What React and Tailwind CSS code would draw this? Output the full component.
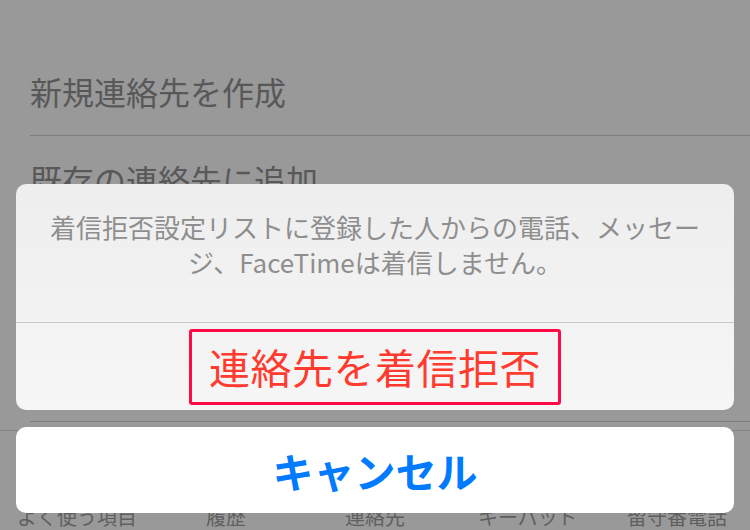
const font = { fontFamily: '"Noto Sans CJK JP", "Noto Sans", sans-serif' };

const tabs = [
  { label: "よく使う項目", w: "w-[115px]", ml: "ml-[17px]" },
  { label: "履歴", w: "w-[38px]", ml: "ml-[74px]" },
  { label: "連絡先", w: "w-[59px]", ml: "ml-[101px]" },
  { label: "キーパッド", w: "w-[94px]", ml: "ml-[74px]" },
  { label: "留守番電話", w: "w-[95px]", ml: "ml-[55px]" },
];

function ActionSheet() {
  return (
    <div className="absolute inset-x-[16px] top-[184px] flex flex-col gap-[17px]">
      <div className="rounded-[10px] overflow-hidden bg-gradient-to-b from-[#eeeeee] to-[#f6f6f6]">
        <div className="h-[138px] px-[24px] pt-[25px] text-center text-[26px] leading-[35px] text-[#8e8e8e]">
          着信拒否設定リストに登録した人からの電話、メッセージ、FaceTimeは着信しません。
        </div>
        <div className="h-px bg-[#c8c8c8]" />
        <div className="h-[87px] flex items-center justify-center">
          <div className="relative px-[20px] h-[76px] flex items-center">
            <span className="text-[41px] leading-none text-[#ff3b30] tracking-[0.5px]">連絡先を着信拒否</span>
            <div className="absolute inset-0 border-[3px] border-[#ff0a45] rounded-[3px]" />
          </div>
        </div>
      </div>
      <button className="h-[86px] rounded-[10px] bg-white flex items-center justify-center">
        <span className="text-[41px] font-bold leading-none text-[#007aff]">キャンセル</span>
      </button>
    </div>
  );
}

export default function App() {
  return (
    <div className="relative w-[750px] h-[530px] overflow-hidden bg-[#999999]" style={font}>
      <div className="pt-[72px]">
        <div className="ml-[30px] border-b border-[#7c7c7c] h-[64px]">
          <span className="text-[32px] leading-[38px] text-[#585858]">新規連絡先を作成</span>
        </div>
        <div className="ml-[30px] h-[286px] pt-[24px] border-b border-[#7c7c7c]">
          <span className="text-[32px] leading-[38px] text-[#585858]">既存の連絡先に追加</span>
        </div>
        <div className="mt-[8px] border-t border-[#858585] flex pt-[74px]">
          {tabs.map(t => (
            <span key={t.label} className={`${t.ml} ${t.w} shrink-0 whitespace-nowrap text-[20px] leading-[24px] text-[#5f5f5f]`}>
              {t.label}
            </span>
          ))}
        </div>
      </div>
      <ActionSheet />
    </div>
  );
}
